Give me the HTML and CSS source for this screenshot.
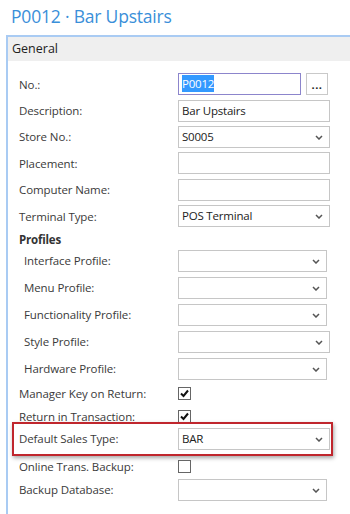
FILE: index.html
```html
<!DOCTYPE html>
<html lang="en">
<head>
    <meta charset="UTF-8">
    <meta name="viewport" content="width=device-width, initial-scale=1.0">
    <title>P0012 · Bar Upstairs</title>
    <link rel="stylesheet" href="styles.css">
</head>
<body>
    <h1 class="page-title">P0012 · Bar Upstairs</h1>

    <div class="fasttab">
        <div class="fasttab-header">General</div>

        <div class="fasttab-body">
            <div class="row">
                <span class="label">No.:</span>
                <div class="field field-focus field-lookup"><span class="selected">P0012</span></div>
                <div class="assist-btn">...</div>
            </div>
            <div class="row">
                <span class="label">Description:</span>
                <div class="field">Bar Upstairs</div>
            </div>
            <div class="row">
                <span class="label">Store No.:</span>
                <div class="field select">S0005<svg class="chevron" viewBox="0 0 8 5"><path d="M1 1 L4 4 L7 1"/></svg></div>
            </div>
            <div class="row">
                <span class="label">Placement:</span>
                <div class="field"></div>
            </div>
            <div class="row">
                <span class="label">Computer Name:</span>
                <div class="field"></div>
            </div>
            <div class="row">
                <span class="label">Terminal Type:</span>
                <div class="field select">POS Terminal<svg class="chevron" viewBox="0 0 8 5"><path d="M1 1 L4 4 L7 1"/></svg></div>
            </div>

            <div class="group-title">Profiles</div>
            <div class="row row-profile">
                <span class="label">Interface Profile:</span>
                <div class="field select field-short"><svg class="chevron" viewBox="0 0 8 5"><path d="M1 1 L4 4 L7 1"/></svg></div>
            </div>
            <div class="row row-profile">
                <span class="label">Menu Profile:</span>
                <div class="field select field-short"><svg class="chevron" viewBox="0 0 8 5"><path d="M1 1 L4 4 L7 1"/></svg></div>
            </div>
            <div class="row row-profile">
                <span class="label">Functionality Profile:</span>
                <div class="field select field-short"><svg class="chevron" viewBox="0 0 8 5"><path d="M1 1 L4 4 L7 1"/></svg></div>
            </div>
            <div class="row row-profile">
                <span class="label">Style Profile:</span>
                <div class="field select"><svg class="chevron" viewBox="0 0 8 5"><path d="M1 1 L4 4 L7 1"/></svg></div>
            </div>
            <div class="row row-profile">
                <span class="label">Hardware Profile:</span>
                <div class="field select field-short"><svg class="chevron" viewBox="0 0 8 5"><path d="M1 1 L4 4 L7 1"/></svg></div>
            </div>

            <div class="row row-check">
                <span class="label">Manager Key on Return:</span>
                <div class="checkbox"><svg viewBox="0 0 11 11"><path d="M2 5.5 L4.5 8 L9 2.5"/></svg></div>
            </div>
            <div class="row row-check">
                <span class="label">Return in Transaction:</span>
                <div class="checkbox"><svg viewBox="0 0 11 11"><path d="M2 5.5 L4.5 8 L9 2.5"/></svg></div>
            </div>
            <div class="row row-highlight">
                <span class="label">Default Sales Type:</span>
                <div class="field select">BAR<svg class="chevron" viewBox="0 0 8 5"><path d="M1 1 L4 4 L7 1"/></svg></div>
            </div>
            <div class="row row-check row-online">
                <span class="label">Online Trans. Backup:</span>
                <div class="checkbox"></div>
            </div>
            <div class="row">
                <span class="label">Backup Database:</span>
                <div class="field select field-short"><svg class="chevron" viewBox="0 0 8 5"><path d="M1 1 L4 4 L7 1"/></svg></div>
            </div>
        </div>
    </div>
</body>
</html>
```

FILE: styles.css
```css
/* General Body Styles */
body {
    font-family: 'Open Sans', 'Noto Sans', sans-serif;
    background-color: #ffffff;
    color: #333;
    margin: 0;
    padding: 0;
    overflow: hidden;
}

/* Page title */
.page-title {
    font-size: 17.5px;
    font-weight: normal;
    color: #3a8fd9;
    margin: 0;
    padding: 4px 0 0 11px;
    height: 35px;
    box-sizing: border-box;
    letter-spacing: -0.2px;
}

/* FastTab panel */
.fasttab {
    margin-left: 6px;
    border-top: 2px solid #a9cbf3;
    border-left: 2px solid #a9cbf3;
    height: 500px;
}

.fasttab-header {
    background-color: #efefef;
    height: 24px;
    line-height: 23px;
    padding-left: 4px;
    font-size: 12.5px;
    color: #222;
}

.fasttab-body {
    padding: 10px 0 0 11px;
}

/* Rows */
.row {
    display: flex;
    align-items: center;
    height: 26.4px;
    position: relative;
}

.row-profile {
    height: 27px;
}

.row-profile .label {
    padding-left: 5px;
    width: 154px;
}

.row-check {
    height: 23px;
}

.row-online {
    height: 20px;
}

.row-highlight {
    height: 28px;
    align-items: flex-start;
}

.row-highlight .label {
    line-height: 22px;
}

.row-highlight::after {
    content: "";
    position: absolute;
    left: -7px;
    top: -6px;
    width: 317px;
    height: 30px;
    border: 2px solid #c0262d;
    box-shadow: 1px 2px 4px rgba(0, 0, 0, 0.35);
}

.label {
    width: 159px;
    flex-shrink: 0;
    font-size: 11.5px;
    color: #3a3a3a;
    letter-spacing: -0.1px;
    white-space: nowrap;
}

.group-title {
    font-weight: bold;
    font-size: 11.5px;
    color: #333;
    height: 18px;
    line-height: 22px;
    letter-spacing: -0.2px;
}

/* Fields */
.field {
    width: 152px;
    height: 22px;
    box-sizing: border-box;
    border: 1px solid #c6c6c6;
    font-size: 11.5px;
    color: #222;
    line-height: 20px;
    padding-left: 3px;
    position: relative;
    letter-spacing: -0.2px;
}

.field-short {
    width: 149px;
}

.field-lookup {
    width: 123px;
}

.field-focus {
    border-color: #8c85cc;
}

.selected {
    background-color: #3399ff;
    color: #fff;
    padding: 1px 0;
}

.select .chevron {
    position: absolute;
    right: 6px;
    top: 8px;
    width: 8px;
    height: 5px;
}

.chevron path {
    fill: none;
    stroke: #555;
    stroke-width: 1.5;
}

.assist-btn {
    width: 22px;
    height: 22px;
    box-sizing: border-box;
    border: 1px solid #c9c9c9;
    margin-left: 5px;
    font-size: 11px;
    font-weight: bold;
    text-align: center;
    line-height: 21px;
    color: #222;
    letter-spacing: 0.5px;
}

/* Checkbox */
.checkbox {
    width: 13px;
    height: 13px;
    box-sizing: border-box;
    border: 1px solid #666;
    background-color: #fff;
}

.checkbox svg {
    width: 11px;
    height: 11px;
    display: block;
}

.checkbox path {
    fill: none;
    stroke: #111;
    stroke-width: 2;
}
```
